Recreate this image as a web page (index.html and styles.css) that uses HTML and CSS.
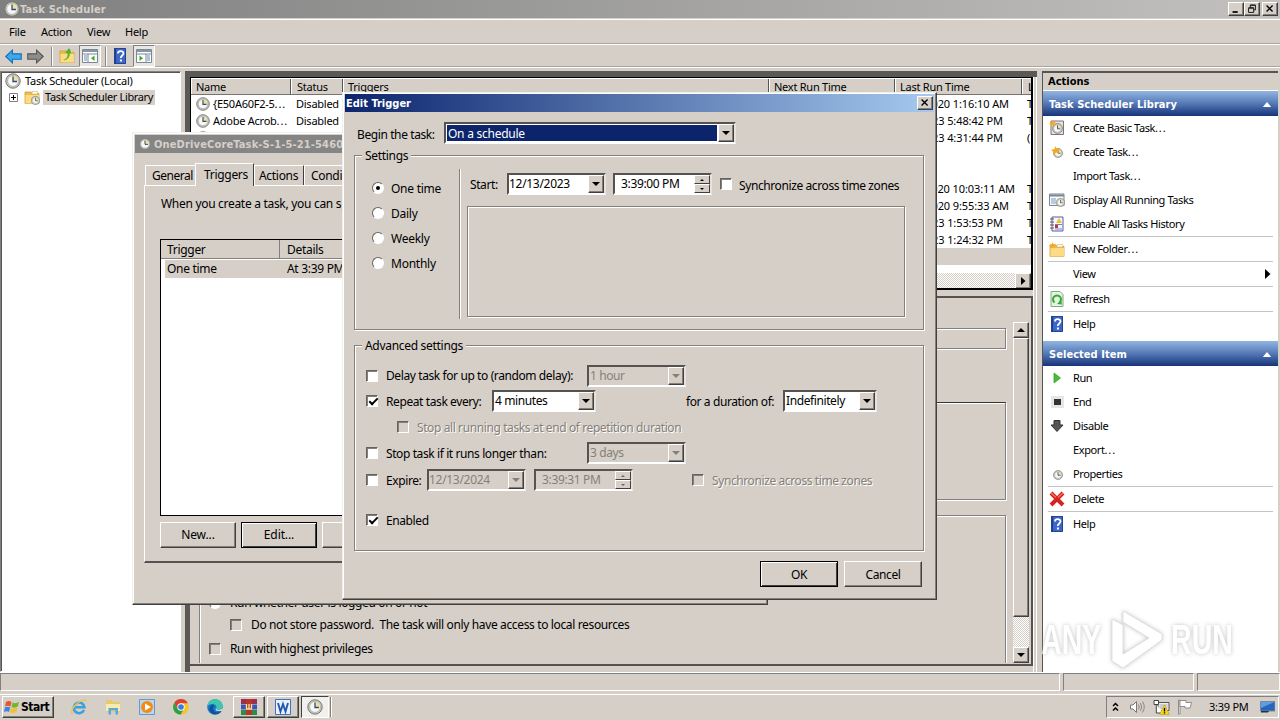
FILE: index.html
```html
<!DOCTYPE html>
<html lang="en">
<head>
<meta charset="utf-8">
<title>Task Scheduler</title>
<link rel="stylesheet" href="styles.css">
</head>
<body>
<svg class="defs" width="0" height="0">
  <symbol id="clock" viewBox="0 0 16 16">
    <circle cx="8" cy="8" r="7.2" fill="#c9c9c4" stroke="#77776f" stroke-width="1"/>
    <circle cx="8" cy="8" r="5.4" fill="#f7f8f4" stroke="#9a9a90" stroke-width=".6"/>
    <path d="M8 8V2.8A5.2 5.2 0 0 1 13.2 8Z" fill="#f0dfa0"/>
    <path d="M8 3.5V8.5H12" fill="none" stroke="#2d4a78" stroke-width="1.3"/>
  </symbol>
  <symbol id="help" viewBox="0 0 16 16">
    <path d="M2 0H14V16H2Z" fill="#3c66c8"/><path d="M2 0H4V16H2Z" fill="#1c3a8c"/><path d="M2.5 .5H13.500V15.500H2.500Z" fill="none" stroke="#24458f"/>
    <path d="M6 5.500C6 2.500 11.500 2.500 11.500 5.300C11.500 7.500 8.800 7.500 8.800 10" fill="none" stroke="#fff" stroke-width="1.800"/><rect x="7.900" y="11.500" width="2" height="2" fill="#fff"/>
  </symbol>
  <symbol id="folder" viewBox="0 0 16 16">
    <path d="M1 3H7L8 4.500H15V14.500H1Z" fill="#eebd4c" stroke="#cf9c3b" stroke-width=".8"/><path d="M8 2.500H13.500V5H8Z" fill="#fff" stroke="#ccb070" stroke-width=".6"/><path d="M1.500 6H15V14.500H1.500Z" fill="#fbdc84"/>
  </symbol>
  <symbol id="star" viewBox="0 0 8 8"><path d="M4 0L5 2.500 8 2 6 4.200 7.500 7 4.500 5.800 2 8 2 5 0 3.500 3 2.700Z" fill="#f7a81c"/></symbol>
  <symbol id="pane" viewBox="0 0 16 16">
    <path d="M.5 1.500H15.500V14.500H.5Z" fill="#fff" stroke="#7c8794"/><path d="M1 2H15V4H1Z" fill="#8796a8"/><path d="M1 6H15" stroke="#7c8794"/><path d="M6 6V14" stroke="#7c8794"/><path d="M2 8H5M2 10H5M2 12H5" stroke="#5d8bc4"/><path d="M12.500 7.500V13L9 10.200Z" fill="#3da52c"/>
  </symbol>
</svg>

<div class="main">
  <div class="titlebar">
    <svg class="i16"><use href="#clock"/></svg><span class="caption">Task Scheduler</span>
    <div class="winbtns"><svg class="wb" viewBox="0 0 16 14"><path d="M4 10.500H10" stroke="#000" stroke-width="2"/></svg><svg class="wb" viewBox="0 0 16 14"><path d="M6 5V2.500H12V8H10M4 6H10V11H4ZM4 5.500H10M6 2.500H12" fill="none" stroke="#000"/></svg><svg class="wb wbx" viewBox="0 0 16 14"><path d="M4 3L11 10M11 3L4 10" stroke="#000" stroke-width="1.600"/></svg></div>
  </div>
  <div class="menubar"><span class="m1">File</span><span class="m2">Action</span><span class="m3">View</span><span class="m4">Help</span></div>
  <div class="toolbar">
    <svg class="arrow" viewBox="0 0 16 14"><path d="M.7 7L7 1V4.500H15.300V9.500H7V13Z" fill="#38aaf0" stroke="#1a6cb4"/></svg>
    <svg class="arrow" viewBox="0 0 16 14"><path d="M15.300 7L9 1V4.500H.7V9.500H9V13Z" fill="#8d8d8d" stroke="#555"/></svg>
    <i class="tsep"></i>
    <svg class="i16 tup" viewBox="0 0 16 16"><use href="#folder"/><path d="M4 12C8 11 9 8 8.500 5H6L10 0 13 5H10.800C11 9 8 13 4 12Z" fill="#55b42c"/></svg>
    <span class="pressed"><svg class="i16"><use href="#pane"/></svg></span>
    <i class="tsep t2"></i>
    <svg class="i16 thelp"><use href="#help"/></svg>
    <span class="pressed"><svg class="i16 flip"><use href="#pane"/></svg></span>
  </div>

  <div class="content">
    <div class="tree">
      <div class="trow root"><svg class="i16"><use href="#clock"/></svg><span>Task Scheduler (Local)</span></div>
      <div class="trow lib"><svg class="plus" viewBox="0 0 9 9"><path d="M.5 .5H8.500V8.500H.5Z" fill="#fff" stroke="#808080"/><path d="M2 4.500H7M4.500 2V7" stroke="#000"/></svg>
        <svg class="i16 lf" viewBox="0 0 16 16"><use href="#folder"/><use href="#clock" x="7" y="7" width="9" height="9"/></svg><span class="sel">Task Scheduler Library</span></div>
    </div>

    <div class="center">
      <div class="list">
        <div class="lhead"><span class="c1">Name</span><span class="c2">Status</span><span class="c3">Triggers</span><span class="c4">Next Run Time</span><span class="c5">Last Run Time</span><span class="c6">L</span></div>
        <div class="lrow"><span class="c1"><svg class="i14"><use href="#clock"/></svg><span>{E50A60F2-5<span class="dots">...</span></span></span><span class="c2">Disabled</span><span class="c5 am">10/8/2020 1:16:10 AM</span><span class="c6">T</span></div>
        <div class="lrow"><span class="c1"><svg class="i14"><use href="#clock"/></svg><span>Adobe Acrob<span class="dots">...</span></span></span><span class="c2">Disabled</span><span class="c5">8/2/2023 5:48:42 PM</span><span class="c6">T</span></div>
        <div class="lrow"><span class="c1"><svg class="i14"><use href="#clock"/></svg></span><span class="c2"></span><span class="c5">8/2/2023 4:31:44 PM</span><span class="c6">(</span></div>
        <div class="lrow"></div>
        <div class="lrow"></div>
        <div class="lrow"><span class="c1"></span><span class="c2"></span><span class="c5 long">10/8/2020 10:03:11 AM</span><span class="c6">T</span></div>
        <div class="lrow"><span class="c1"></span><span class="c2"></span><span class="c5 am">10/8/2020 9:55:33 AM</span><span class="c6">T</span></div>
        <div class="lrow"><span class="c1"></span><span class="c2"></span><span class="c5">8/2/2023 1:53:53 PM</span><span class="c6">T</span></div>
        <div class="lrow"><span class="c1"></span><span class="c2"></span><span class="c5">8/2/2023 1:24:32 PM</span><span class="c6">T</span></div>
        <div class="lrow chosen"></div>
        <div class="hscroll"><span class="sbtn"><svg viewBox="0 0 8 8"><path d="M2 0L6.500 4 2 8Z"/></svg></span></div>
      </div>
      <div class="detail">
        <div class="dform">
          <div class="gb g1"></div>
          <div class="gb g2"></div>
          <div class="gb g3">
            <div class="opt o1"><i class="radio"></i><span>Run whether user is logged on or not</span></div>
            <div class="opt o2"><i class="chk off"></i><span>Do not store password.&nbsp; The task will only have access to local resources</span></div>
            <div class="opt o3"><i class="chk off"></i><span>Run with highest privileges</span></div>
          </div>
        </div>
        <div class="vscroll"><span class="sbtn"><svg viewBox="0 0 8 8"><path d="M0 6L4 2 8 6Z"/></svg></span><span class="thumb"></span><span class="track"></span><span class="sbtn"><svg viewBox="0 0 8 8"><path d="M0 2L4 6 8 2Z"/></svg></span></div>
      </div>
    </div>

    <div class="actions">
      <div class="ahead">Actions</div>
      <div class="ablue"><span>Task Scheduler Library</span><svg viewBox="0 0 10 6"><path d="M0 6L5 0 10 6Z" fill="#fff"/></svg></div>
      <div class="act"><svg viewBox="0 0 16 16"><path d="M2 1H14.500V14.500H2Z" fill="#dfe3ea" stroke="#8d6f72"/><use href="#clock" x="3" y="3" width="11" height="11"/><use href="#star" width="7" height="7"/></svg>Create Basic Task<span class="dots">...</span></div>
      <div class="act"><svg viewBox="0 0 16 16"><use href="#clock" x="4" y="4" width="10" height="10"/><use href="#star" x="2" y="2" width="9" height="9"/></svg>Create Task<span class="dots">...</span></div>
      <div class="act"><svg></svg>Import Task<span class="dots">...</span></div>
      <div class="act"><svg viewBox="0 0 16 16"><path d="M.5 2H15V13.500H.5Z" fill="#f7f9fc" stroke="#7c8794"/><path d="M1 3.500H15" stroke="#7c8794" stroke-width="2"/><path d="M2 7H7M2 9H7M2 11H7" stroke="#7f9abc"/><use href="#clock" x="7" y="6" width="9" height="9"/></svg>Display All Running Tasks</div>
      <div class="act"><svg viewBox="0 0 16 16"><path d="M3 1H14V15H3Z" fill="#f4f6ff" stroke="#5d5da0"/><path d="M1 3H5M1 6H5M1 9H5M1 12H5" stroke="#555"/><path d="M10 2L13 7H7Z" fill="#e9c520"/><path d="M6 8.500H13M6 13H13" stroke="#6c84c8"/><rect x="6" y="9" width="3" height="3" fill="#d23030"/></svg>Enable All Tasks History</div>
      <hr><div class="act"><svg viewBox="0 0 16 16"><use href="#folder" y="1"/><use href="#star" x="0" y="1" width="7" height="7"/></svg>New Folder<span class="dots">...</span></div>
      <hr><div class="act"><svg></svg>View<svg class="more" viewBox="0 0 6 10"><path d="M0 0L5.500 5 0 10Z"/></svg></div>
      <hr><div class="act"><svg viewBox="0 0 16 16"><path d="M2 .5H11L14 3.500V15.500H2Z" fill="#e3f3e0" stroke="#86a984"/><path d="M5.500 11.500A4 4 0 1 1 10.500 11.500" fill="none" stroke="#35a935" stroke-width="2"/><path d="M8 13L13 13.500 12 9Z" fill="#35a935"/></svg>Refresh</div>
      <hr><div class="act"><svg><use href="#help"/></svg>Help</div>
      <div class="ablue second"><span>Selected Item</span><svg viewBox="0 0 10 6"><path d="M0 6L5 0 10 6Z" fill="#fff"/></svg></div>
      <div class="act"><svg viewBox="0 0 16 16"><path d="M5 3L11.500 8 5 13Z" fill="#43c12e" stroke="#38962a" stroke-width=".7"/></svg>Run</div>
      <div class="act"><svg viewBox="0 0 16 16"><path d="M2 2H15V14H2Z" fill="#e6e6e6"/><path d="M5 5H12V11H5Z" fill="#333"/></svg>End</div>
      <div class="act"><svg viewBox="0 0 16 16"><path d="M5 2.500H11V7H14L8 13.500 2 7H5Z" fill="#555" stroke="#333"/></svg>Disable</div>
      <div class="act"><svg></svg>Export<span class="dots">...</span></div>
      <div class="act"><svg viewBox="0 0 16 16"><use href="#clock" x="4" y="4" width="10" height="10"/></svg>Properties</div>
      <hr><div class="act"><svg viewBox="0 0 16 16"><path d="M2 2L14 14M14 2L2 14" stroke="#d8201e" stroke-width="4"/><path d="M2 2L7 6.500M14 2L9 6.500" stroke="#f07068" stroke-width="1.500"/></svg>Delete</div>
      <hr><div class="act"><svg><use href="#help"/></svg>Help</div>
    </div>
  </div>
  <div class="status"><span></span><span></span><span></span></div>
</div>

<div class="taskbar">
  <div class="start"><svg viewBox="0 0 16 16"><path d="M2 3Q5 1 7.500 3L6.500 7.500Q4 5.800 1 7.500Z" fill="#e8572a"/><path d="M8.500 3.500Q11.500 5 15 3L13.800 7.500Q11 9.500 7.500 8Z" fill="#72b52e"/><path d="M.8 8.500Q4 6.800 6.300 8.500L5 13Q3 11.500 0 13Z" fill="#3a86dc"/><path d="M7.200 9Q10 10.500 13.500 8.500L12.300 13Q9.500 15 6 13.300Z" fill="#f6c02c"/></svg>Start</div>
  <div class="tb"><svg viewBox="0 0 16 16"><path d="M13 11A5.300 5.300 0 1 1 13.400 8.200H4" fill="none" stroke="#3ba0e0" stroke-width="2.600"/><path d="M1.500 15C-2 11 9 -1 15.500 1.500" fill="none" stroke="#edc34c" stroke-width="1.400"/></svg></div>
  <div class="tb"><svg viewBox="0 0 16 16"><path d="M1 1H7L8 3H15V13H1Z" fill="#e6c96a"/><path d="M1 5H15V12H1Z" fill="#f8ebb0"/><path d="M3.500 15.500V9H13V15.500H10.500V11.500H6V15.500Z" fill="#5da8d8"/></svg></div>
  <div class="tb"><svg viewBox="0 0 16 16"><path d="M.5 .5H15.500V15.500H.5Z" fill="#b9d7f0" stroke="#5f9bcf"/><circle cx="8" cy="8" r="6" fill="#f48a16"/><path d="M6 4.500L12 8 6 11.500Z" fill="#fff"/></svg></div>
  <div class="tb"><svg viewBox="0 0 16 16"><circle cx="8" cy="8" r="7.800" fill="#f5c52b"/><path d="M1.200 4A7.800 7.800 0 0 1 14.800 4.200H8L4.800 10Z" fill="#de4032"/><path d="M1.200 4A7.800 7.800 0 0 0 7.500 15.800L11 9.500 5 10Z" fill="#2da04c"/><circle cx="8" cy="8" r="3.700" fill="#fff"/><circle cx="8" cy="8" r="2.800" fill="#377cdc"/></svg></div>
  <div class="tb"><svg viewBox="0 0 16 16"><circle cx="8" cy="8" r="7.800" fill="#1479c4"/><path d="M.4 7C1 -2 15 -2 15.800 7C15.800 11 10 11 9.500 9C10 4 3 4 .4 7Z" fill="#3cc8b0"/><path d="M6 9C6 14 11 14.500 14.500 12C11 17 4 16 2.500 11C2 7.500 5 5 7 6Z" fill="#114e9c"/><path d="M9.300 9C10 11.500 13 11 15.800 9V12H10C8 11 8.500 9.500 9.300 9Z" fill="#d5cfc8"/></svg></div>
  <div class="tb raised"><svg viewBox="0 0 16 16"><path d="M0 0H16V5H0Z" fill="#9d2e50"/><path d="M0 5.500H16V10.500H0Z" fill="#3a57b8"/><path d="M0 11H16V16H0Z" fill="#2d8c45"/><path d="M5 0H11V16H5Z" fill="#b3382b"/><path d="M5.500 5V10M8 5V10M10.500 5V10M5 10H11" stroke="#f5e3a0" stroke-width="1.300"/></svg></div>
  <div class="tb raised"><svg viewBox="0 0 16 16"><path d="M.5 .5H15.500V15.500H.5Z" fill="#e8f1fb" stroke="#3d73bb"/><path d="M3 4L5.500 12.500 8 5 10.500 12.500 13 4" fill="none" stroke="#2458ae" stroke-width="1.900"/></svg></div>
  <div class="tb down"><svg><use href="#clock"/></svg></div>
  <i class="tbsep"></i>
  <div class="tray">
    <svg class="chev" viewBox="0 0 7 10"><path d="M1 4L3.500 1.500 6 4M1 8.500L3.500 6 6 8.500" fill="none" stroke="#000" stroke-width="1.500"/></svg>
    <svg class="vol" viewBox="0 0 16 14"><path d="M1 5H3.500L7 1.500V12.500L3.500 9H1Z" fill="#fff" stroke="#777"/><path d="M9 4.500Q10.500 7 9 9.500M11 3Q13.300 7 11 11M13 1.500Q16.500 7 13 12.500" fill="none" stroke="#888"/></svg>
    <svg class="net" viewBox="0 0 17 16"><path d="M5 3.500H16V11.500H5Z" fill="#eee" stroke="#555"/><path d="M6.500 5H14.500V10H6.500Z" fill="#ccc"/><path d="M1 1.500H5.500V5.500H1ZM3.300 5.500V14H10" fill="#fff" stroke="#444"/><path d="M11.500 6L16.500 15.500H6.500Z" fill="#f8d322" stroke="#b89a10" stroke-width=".6"/><path d="M11.500 9V12.500M11.500 13.300V14.500" stroke="#000" stroke-width="1.300"/></svg>
    <svg class="flag" viewBox="0 0 16 16"><path d="M1.500 1H3V15H1.500Z" fill="#fff" stroke="#777" stroke-width=".8"/><path d="M3 1.500H9V3.500H14.500L13 9H8V7.500H3Z" fill="#fff" stroke="#777" stroke-width=".8"/></svg>
    <span class="time">3:39 PM</span>
    <svg class="desk" viewBox="0 0 15 13"><path d="M.5 1.500H15V11H.5Z" fill="#2766bd" stroke="#789"/><path d="M1 2H14.500L1 8Z" fill="#5f9ce4"/><path d="M1 11H9L8 12.500H1Z" fill="#234"/></svg>
  </div>
</div>

<div class="dialog props">
  <div class="ptitle"><svg class="i12"><use href="#clock"/></svg><span>OneDriveCoreTask-S-1-5-21-5460</span></div>
  <div class="tabs"><span class="tab t-gen">General</span><span class="tab on">Triggers</span><span class="tab t-act">Actions</span><span class="tab t-con">Conditions</span></div>
  <div class="sheet">
    <p>When you create a task, you can specify</p>
    <div class="tlist">
      <div class="thead"><span>Trigger</span><span>Details</span></div>
      <div class="trow2"><span>One time</span><span>At 3:39 PM on</span></div>
    </div>
    <div class="btns"><span class="btn">New...</span><span class="btn def">Edit...</span><span class="btn">Delete</span></div>
  </div>
</div>

<div class="dialog edit">
  <div class="etitle"><span>Edit Trigger</span><svg class="wb" viewBox="0 0 16 14"><path d="M4 3L11 10M11 3L4 10" stroke="#000" stroke-width="1.600"/></svg></div>
  <div class="begin"><span>Begin the task:</span><div class="combo blue"><span>On a schedule</span><i class="dd"></i></div></div>
  <div class="group settings">
    <div class="legend">Settings</div>
    <div class="radios">
      <label><i class="radio on"></i><span>One time</span></label><label><i class="radio"></i><span>Daily</span></label><label><i class="radio"></i><span>Weekly</span></label><label><i class="radio"></i><span>Monthly</span></label>
    </div>
    <div class="sched">
      <div class="line"><span class="startl">Start:</span><div class="combo date"><span>12/13/2023</span><i class="dd"></i></div><div class="combo time2"><span>3:39:00 PM</span><i class="spin"><b></b><b></b></i></div><i class="chk"></i><span class="sync">Synchronize across time zones</span></div>
      <div class="inner"></div>
    </div>
  </div>
  <div class="group adv">
    <div class="legend">Advanced settings</div>
    <div class="arow r1"><i class="chk"></i><span class="delay">Delay task for up to (random delay):</span><div class="combo dis w98"><span>1 hour</span><i class="dd"></i></div></div>
    <div class="arow r2"><i class="chk v"></i><span class="rep">Repeat task every:</span><div class="combo w103"><span>4 minutes</span><i class="dd"></i></div><span class="dur">for a duration of:</span><div class="combo w94"><span>Indefinitely</span><i class="dd"></i></div></div>
    <div class="arow r3"><i class="chk off"></i><span class="gray">Stop all running tasks at end of repetition duration</span></div>
    <div class="arow r4"><i class="chk"></i><span class="delay">Stop task if it runs longer than:</span><div class="combo dis w98"><span>3 days</span><i class="dd"></i></div></div>
    <div class="arow r5"><i class="chk"></i><span class="exp">Expire:</span><div class="combo dis date"><span>12/13/2024</span><i class="dd"></i></div><div class="combo dis time2"><span>3:39:31 PM</span><i class="spin"><b></b><b></b></i></div><i class="chk off c2x"></i><span class="gray">Synchronize across time zones</span></div>
    <div class="arow r6"><i class="chk v"></i><span>Enabled</span></div>
  </div>
  <div class="ebtns"><span class="btn def">OK</span><span class="btn">Cancel</span></div>
</div>

<div class="mark"><span>ANY</span><svg viewBox="0 0 56 64"><path d="M14 3L53 26V32L14 60L3 53V11L14 17V46L40 30L14 14Z" fill="#fff" stroke="#c9c9c9" stroke-opacity=".7"/></svg><span>RUN</span></div>
</body>
</html>
```
FILE: styles.css
```css
* { box-sizing: border-box; }
body { margin: 0; width: 1280px; height: 720px; overflow: hidden; position: relative; background: #d5cfc8; color: #000; font: 11px/14px "Noto Sans", "Open Sans", sans-serif; letter-spacing: -0.25px; white-space: nowrap; }
svg { display: block; flex: none; }
i { display: block; flex: none; }
.defs { position: absolute; }
.i16 { width: 16px; height: 16px; }
.i14 { width: 14px; height: 14px; }
.i12 { width: 12px; height: 12px; }
.dots { letter-spacing: 0.9px; }

.main { height: 694px; display: flex; flex-direction: column; }
.titlebar { height: 18px; display: flex; align-items: center; padding: 0 2px 0 4px; background: linear-gradient(90deg, #7f7f7f, #c2c1bf); color: #d5cfc8; }
.caption { font: bold 11px "DejaVu Sans Condensed", sans-serif; letter-spacing: 0.15px; }
.winbtns { margin-left: auto; display: flex; }
.wb { width: 16px; height: 14px; background: #d5cfc8; border: 1px solid; border-color: #fff #404040 #404040 #fff; box-shadow: inset -1px -1px #848078; }
.wbx { margin-left: 2px; }
.menubar { height: 26px; margin-top: 1px; border-top: 1px solid #fff; border-bottom: 1px solid #fff; display: flex; align-items: center; padding-left: 9px; box-shadow: inset 0 -1px #aaa59e; }
.m1 { width: 32px; } .m2 { width: 46px; } .m3 { width: 38px; }
.toolbar { height: 23px; display: flex; align-items: center; padding-left: 5px; border-bottom: 1px solid #fff; box-shadow: inset 0 -1px #aaa59e; }
.arrow { width: 17px; height: 15px; margin-right: 5px; }
.tsep { width: 2px; height: 19px; margin-left: 2px; border-left: 1px solid #888; border-right: 1px solid #fff; }
.tup { margin: 0 4px 0 6px; }
.pressed { width: 22px; height: 22px; padding: 2px; border: 1px solid; border-color: #808080 #fff #fff #808080; background: #eae7e3; }
.t2 { margin: 0 5px 0 4px; }
.thelp { margin-right: 5px; }
.flip { transform: scaleX(-1); }

.content { height: 602px; margin-top: 2px; display: flex; padding-top: 1px; }
.content, .tree, .center, .actions { overflow: hidden; }
.tree { width: 181px; border: 1px solid #808080; border-right-color: #fff; border-bottom-color: #fff; background: #fff; padding-top: 1px; box-shadow: inset 1px 1px #555; }
.trow { display: flex; align-items: center; height: 16px; }
.root { padding-left: 4px; gap: 4px; }
.lib { padding-left: 8px; letter-spacing: -0.35px; }
.plus { width: 9px; height: 9px; }
.lf { margin: 0 3px 0 6px; }
.sel { background: #d5cfc8; padding: 0 2px; height: 15px; }

.center { width: 852px; margin-left: 4px; display: flex; flex-direction: column; border: solid #5b5956; border-width: 6px 0 0 5px; background: linear-gradient(90deg, transparent 843px, #fff 843px, #fff 844px, #d5cfc8 844px, #d5cfc8 846px, #fff 846px, #fff 847px, #d5cfc8 847px); }
.list { width: 843px; height: 213px; border: 2px solid #000; border-left-width: 1px; border-top-width: 1px; padding-top: 1px; background: #fff; display: flex; flex-direction: column; overflow: hidden; }
.lhead { display: flex; height: 16px; flex: none; background: #d5cfc8; border-bottom: 1px solid #77736e; line-height: 16px; }
.lhead span { border-right: 1px solid #555; border-left: 1px solid #fff; }
.c1, .c2, .c3, .c4, .c5, .c6 { flex: none; overflow: hidden; }
.c1 { width: 100px; padding-left: 4px; } .c2 { width: 52px; padding-left: 5px; } .c3 { width: 426px; padding-left: 4px; } .c4 { width: 126px; padding-left: 4px; } .c5 { width: 127px; padding-left: 4px; } .c6 { width: 12px; padding-left: 5px; }
.lrow { height: 17px; flex: none; display: flex; align-items: center; }
.lrow .c1 { display: flex; align-items: center; padding-left: 5px; gap: 3px; }
.lrow .c5 { margin-left: 552px; padding: 0 19px 0 0; text-align: right; letter-spacing: -0.1px; }
.lrow .c5.am { padding-right: 13px; }
.lrow .c5.long { padding-right: 7px; }
.chosen { background: #d5cfc8; }
.hscroll { margin-top: 8px; height: 17px; flex: none; display: flex; justify-content: flex-end; background: repeating-conic-gradient(#fff 0 25%, #d5cfc8 0 50%) 0 0 / 2px 2px; }
.sbtn { width: 16px; height: 16px; flex: none; display: flex; align-items: center; justify-content: center; background: #d5cfc8; border: 1px solid; border-color: #fff #404040 #404040 #fff; box-shadow: inset -1px -1px #848078; }
.sbtn svg { width: 8px; height: 8px; }
.detail { width: 843px; height: 370px; margin-top: 6px; border-top: 2px solid #55524f; border-right: 2px solid #55524f; border-bottom: 2px solid #55524f; display: flex; padding: 24px 0 1px 9px; background: #d5cfc8; }
.dform { width: 814px; overflow: hidden; display: flex; flex-direction: column; padding-top: 6px; }
.gb { width: 807px; flex: none; border: 1px solid #808080; box-shadow: 1px 1px #fff, inset 1px 1px #fff; }
.g1 { height: 21px; }
.g2 { height: 98px; margin-top: 53px; border-top-color: #333; }
.g3 { height: 200px; margin-top: 15px; display: flex; flex-direction: column; }
.opt { display: flex; align-items: center; height: 24px; flex: none; gap: 9px; font-size: 12px; letter-spacing: -0.36px; }
.o1 { margin-top: 75px; padding-left: 9px; } .o2 { padding-left: 30px; margin-top: -2px; } .o3 { padding-left: 9px; }
.vscroll { width: 16px; display: flex; flex-direction: column; }
.thumb { height: 279px; background: #d5cfc8; border: 1px solid; border-color: #fff #404040 #404040 #fff; box-shadow: inset -1px -1px #848078; }
.track { flex: 1; background: repeating-conic-gradient(#fff 0 25%, #d5cfc8 0 50%) 0 0 / 2px 2px; }

.actions { width: 236px; margin-left: 5px; background: #fff; border-left: 1px solid #555; border-top: 2px solid #555; display: flex; flex-direction: column; letter-spacing: -0.4px; }
.ahead { height: 17px; flex: none; background: #d5cfc8; padding-left: 5px; font: bold 11px/18px "DejaVu Sans Condensed", sans-serif; letter-spacing: 0; }
.ablue { height: 25px; flex: none; margin-top: 1px; display: flex; align-items: center; justify-content: space-between; padding: 1px 6px 0 6px; color: #fff; font: bold 11px "DejaVu Sans Condensed", sans-serif; letter-spacing: 0.05px; background: linear-gradient(#92b5e2, #5579b6 50%, #173379); }
.ablue svg { width: 10px; height: 5px; }
.second { margin-top: 5px; }
.act { height: 24px; flex: none; display: flex; align-items: center; padding-left: 6px; }
.act svg { width: 16px; height: 16px; margin-right: 8px; }
.act .more { width: 6px; height: 10px; margin-left: auto; margin-right: 7px; }
.actions hr { width: 225px; height: 1px; margin: 0 0 0 5px; border: 0; background: #c4c4c4; flex: none; }

.status { height: 19px; display: flex; gap: 3px; border-top: 1px solid #fff; padding-right: 3px; }
.status span { border: 1px solid #fff; border-top-color: #808080; border-left-color: #808080; flex: none; width: 1060px; }
.status span:nth-child(2) { width: 131px; }
.status span:nth-child(3) { width: 83px; }

.taskbar { height: 26px; border-top: 1px solid #fff; display: flex; align-items: center; padding: 0 1px 2px 2px; }
.start { width: 52px; height: 22px; display: flex; align-items: center; gap: 1px; font: bold 12px "DejaVu Sans Condensed", sans-serif; letter-spacing: -0.5px; border: 1px solid; border-color: #fff #404040 #404040 #fff; box-shadow: inset -1px -1px #848078; margin-right: 9px; }
.start svg { width: 16px; height: 16px; margin-left: 1px; }
.tb { width: 32px; height: 22px; margin-right: 2px; display: flex; align-items: center; justify-content: center; }
.tb svg { width: 16px; height: 16px; }
.raised { border: 1px solid; border-color: #fff #404040 #404040 #fff; box-shadow: inset -1px -1px #848078; }
.down { width: 28px; margin-right: 0; border: 1px solid; border-color: #404040 #fff #fff #404040; background: #f2f0ed; }
.tbsep { width: 2px; height: 20px; margin-left: 1px; border-left: 1px solid #848078; border-right: 1px solid #fff; }
.tray { margin-left: auto; width: 173px; height: 22px; border: 1px solid; border-color: #808080 #fff #fff #808080; display: flex; align-items: center; padding-left: 5px; }
.chev { width: 7px; height: 10px; margin-right: 10px; }
.vol { width: 17px; height: 14px; margin-right: 7px; }
.net { width: 17px; height: 16px; margin-right: 7px; }
.flag { width: 16px; height: 16px; }
.time { width: 40px; margin: 0 11px 0 16px; }
.desk { width: 15px; height: 13px; }

.dialog { position: absolute; overflow: hidden; background: #d5cfc8; border: 1px solid; border-color: #f2f0ed #404040 #404040 #f2f0ed; box-shadow: inset -1px -1px #848078, inset 1px 1px #fff; font-size: 12px; line-height: 16px; letter-spacing: -0.4px; }
.props { left: 132px; top: 132px; width: 636px; height: 473px; letter-spacing: -0.3px; }
.ptitle { margin: 2px; height: 18px; display: flex; align-items: center; padding-left: 4px; gap: 3px; background: #858585; color: #d5cfc8; font: bold 11px "DejaVu Sans Condensed", sans-serif; }
.ptitle span { letter-spacing: 0.15px; }
.tabs { display: flex; align-items: flex-end; height: 30px; padding-left: 12px; margin-top: 1px; }
.tab { height: 20px; padding: 2px 0 0 6px; border: 1px solid #fff; border-right: 1px solid #404040; border-bottom: 0; }
.t-gen { width: 50px; border-right: 0; letter-spacing: -0.5px; }
.tab.on { width: 59px; height: 23px; padding: 3px 0 0 8px; margin-bottom: -1px; background: #d5cfc8; z-index: 1; }
.t-act { width: 50px; padding-left: 4px; }
.t-con { width: 70px; }
.sheet { margin: 0 11px; height: 378px; border: 1px solid #fff; border-right-color: #404040; border-bottom: 2px solid #55524f; padding: 10px 15px 0 15px; }
.sheet p { margin: 0; height: 43px; padding-left: 1px; }
.tlist { height: 277px; background: #fff; border: 1px solid #000; }
.thead { display: flex; height: 19px; background: #d5cfc8; border-bottom: 1px solid #848078; line-height: 20px; }
.thead span { border-right: 1px solid #848078; padding-left: 6px; width: 119px; }
.thead span + span { padding-left: 7px; }
.trow2 { display: flex; height: 18px; margin: 1px 0 0 4px; background: #d5cfc8; line-height: 18px; }
.trow2 span { padding-left: 2px; width: 120px; }
.btns { display: flex; gap: 5px; margin-top: 6px; }
.btn { height: 26px; width: 76px; text-align: center; line-height: 24px; border: 1px solid; border-color: #fff #404040 #404040 #fff; box-shadow: inset -1px -1px #848078; background: #d5cfc8; }
.btn.def { border-color: #000; box-shadow: inset 1px 1px #fff, inset -1px -1px #404040; }
.btns .btn { letter-spacing: -0.1px; }

.edit { left: 342px; top: 92px; width: 595px; height: 508px; }
.etitle { margin: 1px 2px 0; height: 18px; display: flex; align-items: center; justify-content: space-between; padding: 0 3px 0 1px; background: linear-gradient(90deg, #0c256e, #a5c9ef); color: #fff; font: bold 11px "DejaVu Sans Condensed", sans-serif; letter-spacing: 0; }
.etitle .wb { margin-right: -2px; }
.begin { display: flex; align-items: center; height: 22px; margin: 10px 0 0 14px; }
.begin > span { width: 87px; padding-top: 3px; }
.combo { height: 22px; flex: none; display: flex; background: #fff; border: 2px solid; border-color: #55524f #e6e2de #fff #55524f; padding: 0; line-height: 16px; }
.combo span { flex: 1; padding: 1px 0 0 1px; }
.combo.blue { width: 292px; }
.blue span { background: #0c246c; color: #fff; margin: 1px; padding: 1px 0 0 1px; letter-spacing: -0.25px; }
.dd { width: 16px; height: 18px; background: #d5cfc8; border: 1px solid; border-color: #fff #404040 #404040 #fff; box-shadow: inset -1px -1px #848078; display: flex; align-items: center; justify-content: center; }
.dd::before { content: ""; border: 4px solid transparent; border-top-color: #000; border-bottom: 0; }
.dis { background: #d5cfc8; color: #858079; }
.dis .dd::before { border-top-color: #858079; }
.spin { width: 16px; display: flex; flex-direction: column; }
.spin b { flex: 1; background: #d5cfc8; border: 1px solid; border-color: #fff #404040 #404040 #fff; display: flex; align-items: center; justify-content: center; }
.spin b::before { content: ""; border: 2px solid transparent; border-bottom-color: #000; border-top: 0; }
.spin b + b::before { border: 2px solid transparent; border-top-color: #000; border-bottom: 0; }
.dis .spin b::before { opacity: .5; }
.group { margin-left: 11px; width: 570px; border: 1px solid #848078; box-shadow: 1px 1px #fff, inset 1px 1px #fff; }
.legend { width: max-content; height: 16px; margin: -8px 0 0 7px; padding: 0 3px; background: #d5cfc8; letter-spacing: -0.3px; }
.settings { margin-top: 11px; height: 175px; display: grid; grid-template-columns: 105px 1fr; grid-template-rows: 7px 1fr; }
.settings .legend { grid-column: 1 / 3; }
.radios { border-right: 1px solid #848078; box-shadow: 1px 0 #fff; padding: 6px 0 0 17px; margin: 6px 0 10px; }
.radios label { display: flex; align-items: center; gap: 7px; height: 25px; letter-spacing: -0.25px; }
.radios label span { padding-top: 2px; }
.radio { width: 12px; height: 12px; border-radius: 50%; background: #fff; border: 1.500px solid; border-color: #66625d #fff #fff #66625d; display: flex; align-items: center; justify-content: center; }
.radio.on::before { content: ""; width: 4px; height: 4px; border-radius: 50%; background: #000; }
.sched { padding: 10px 0 0 7px; }
.line { display: flex; align-items: center; height: 22px; }
.startl { width: 40px; padding: 1px 0 0 3px; }
.date { width: 99px; margin-right: 8px; letter-spacing: -0.3px; }
.line .date { margin-right: 7px; }
.date span { padding-left: 0; }
.time2 { width: 99px; margin-right: 8px; letter-spacing: -0.35px; }
.time2 span { padding-left: 6px; }
.chk { width: 12px; height: 12px; background: #fff; border: 1px solid; border-color: #66625d #fff #fff #66625d; box-shadow: inset 1px 1px #848078; }
.chk.off { background: #d5cfc8; }
.chk.v::before { content: ""; display: block; width: 7px; height: 3px; margin: 2px 0 0 2px; border: solid #000; border-width: 0 0 2px 2px; transform: rotate(-45deg); }
.sync { margin-left: 7px; padding-top: 3px; }
.inner { width: 438px; height: 111px; margin-top: 11px; border: 1px solid #848078; box-shadow: 1px 1px #fff, inset 1px 1px #fff; }
.adv { margin-top: 15px; height: 206px; display: flex; flex-direction: column; }
.adv .legend { flex: none; }
.arow { display: flex; align-items: center; flex: none; height: 26px; padding-left: 11px; gap: 8px; }
.arow > span { padding-top: 2px; }
.arow .chk { margin-top: -1px; }
.arow .combo { margin-right: 0; }
.r1 { margin-top: 9px; }
.r1 > span { padding-top: 0; }
.r2 { margin-top: -1px; }
.r3 { padding-left: 42px; height: 26px; }
.r5 { height: 28px; }
.r6 { margin-top: 13px; }
.delay { width: 193px; }
.rep { width: 98px; }
.dur { width: 89px; margin-left: 82px; }
.w98 { width: 99px; } .w103 { width: 104px; } .w94 { width: 94px; }
.exp { width: 33px; }
.gray { color: #858079; text-shadow: 1px 1px #fff; }
.c2x { margin-left: 51px; }
.ebtns { display: flex; justify-content: flex-end; gap: 6px; margin: 10px 14px 0 0; }
.ebtns .btn { width: 78px; line-height: 25px; }

.mark { position: absolute; left: 1041px; top: 608px; width: 195px; height: 64px; display: flex; align-items: center; gap: 6px; color: #fff; font: bold 42px "Liberation Sans", sans-serif; letter-spacing: 0; opacity: .7; filter: drop-shadow(0 0 2px #aaa); }
.mark span { width: 62px; transform: scaleX(.68); transform-origin: 0 50%; }
.mark svg { width: 56px; height: 64px; }
```
